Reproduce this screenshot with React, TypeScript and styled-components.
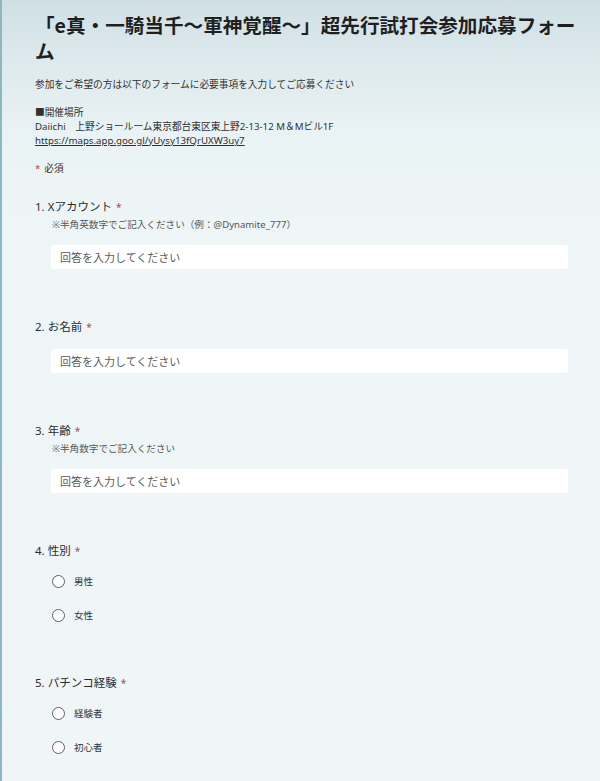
import React from 'react';
import styled, { createGlobalStyle } from 'styled-components';

const GlobalStyle = createGlobalStyle`
  html, body {
    margin: 0;
    padding: 0;
    background: #f0f6f8;
  }
  body {
    font-family: 'Noto Sans', 'Noto Sans CJK JP', sans-serif;
    color: #242424;
  }
`;

const Page = styled.div`
  min-height: 781px;
  box-sizing: border-box;
  border-left: 2px solid #8fb8be;
  padding: 12px 0 30px 33px;
  background: linear-gradient(
    180deg,
    #cfe0e5 0px,
    #dde9ed 60px,
    #e9f2f4 130px,
    #eef5f7 220px,
    #f0f6f8 781px
  );
`;

const Header = styled.header`
  padding-right: 7px;
`;

const Title = styled.h1`
  margin: 0;
  font-family: 'Noto Sans CJK JP', sans-serif;
  font-size: 19.6px;
  line-height: 26px;
  font-weight: 700;
  color: #1f1f1f;
`;

const Text = styled.p`
  margin: 14px 0 0;
  font-size: 9.7px;
  line-height: 14px;
  color: #323130;
`;

const Link = styled.a`
  color: #323130;
  text-decoration: underline;
`;

const Required = styled.span`
  color: #b0474c;
  margin-right: 4px;
`;

const Questions = styled.div`
  margin-top: 22px;
  padding-right: 32px;
  display: flex;
  flex-direction: column;
  gap: 49px;
`;

const Question = styled.section`
  display: flex;
  flex-direction: column;
`;

const Label = styled.div`
  font-size: 11.5px;
  line-height: 18px;
  color: #2b2b2b;

  span {
    color: #b0474c;
    margin-left: 4px;
    font-size: 10px;
  }
`;

const Hint = styled.div`
  margin: 2px 0 0 17px;
  font-size: 9.6px;
  line-height: 13px;
  color: #555;
`;

const Input = styled.input<{ $gap: number }>`
  margin: ${(p) => p.$gap}px 0 0 16px;
  height: 24px;
  box-sizing: border-box;
  border: none;
  border-radius: 3px;
  background: #fff;
  padding: 0 9px;
  font-family: 'Noto Sans', 'Noto Sans CJK JP', sans-serif;
  font-size: 11px;
  outline: none;

  &::placeholder {
    color: #5a5a5a;
  }
`;

const Options = styled.div`
  margin: 11px 0 0 17px;
  display: flex;
  flex-direction: column;
  gap: 14px;
`;

const Option = styled.label`
  display: flex;
  align-items: center;
  gap: 9px;
  height: 20px;
  font-size: 9.5px;
  color: #333;
`;

const Circle = styled.span`
  width: 13px;
  height: 13px;
  box-sizing: border-box;
  border: 1px solid #5f5f5f;
  border-radius: 50%;
  background: #fff;
`;

type Q = {
  no: number;
  title: string;
  hint?: string;
  options?: string[];
};

const questions: Q[] = [
  { no: 1, title: 'Xアカウント', hint: '※半角英数字でご記入ください（例：@Dynamite_777）' },
  { no: 2, title: 'お名前' },
  { no: 3, title: '年齢', hint: '※半角数字でご記入ください' },
  { no: 4, title: '性別', options: ['男性', '女性'] },
  { no: 5, title: 'パチンコ経験', options: ['経験者', '初心者'] },
];

const App: React.FC = () => {
  return (
    <Page>
      <GlobalStyle />
      <Header>
        <Title>「e真・一騎当千～軍神覚醒～」超先行試打会参加応募フォーム</Title>
        <Text>参加をご希望の方は以下のフォームに必要事項を入力してご応募ください</Text>
        <Text>
          ■開催場所
          <br />
          Daiichi　上野ショールーム東京都台東区東上野2-13-12 M＆Mビル1F
          <br />
          <Link href="#">https://maps.app.goo.gl/yUysy13fQrUXW3uy7</Link>
        </Text>
        <Text>
          <Required>*</Required>必須
        </Text>
      </Header>
      <Questions>
        {questions.map((q) => (
          <Question key={q.no}>
            <Label>
              {q.no}. {q.title}
              <span>*</span>
            </Label>
            {q.hint && <Hint>{q.hint}</Hint>}
            {q.options ? (
              <Options>
                {q.options.map((o) => (
                  <Option key={o}>
                    <Circle />
                    {o}
                  </Option>
                ))}
              </Options>
            ) : (
              <Input placeholder="回答を入力してください" $gap={q.hint ? 14 : 13} />
            )}
          </Question>
        ))}
      </Questions>
    </Page>
  );
};

export default App;
